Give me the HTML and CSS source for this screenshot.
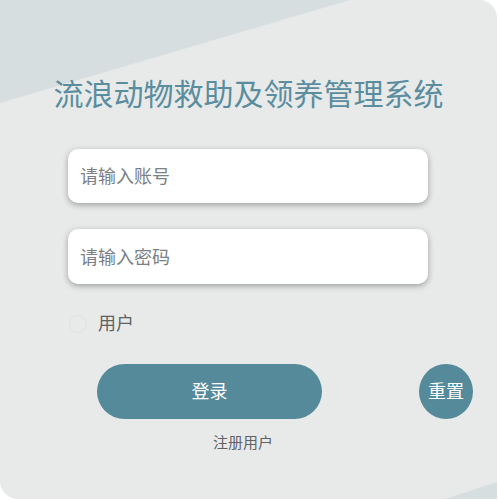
FILE: index.html
```html
<!DOCTYPE html>
<html lang="zh-CN">
<head>
<meta charset="utf-8">
<title>流浪动物救助及领养管理系统</title>
<link rel="stylesheet" href="styles.css">
</head>
<body>
<div class="card">
  <div class="content">
    <h1 class="title">流浪动物救助及领养管理系统</h1>
    <form class="form">
      <input class="field" type="text" placeholder="请输入账号">
      <input class="field field-pwd" type="password" placeholder="请输入密码">
      <label class="role">
        <span class="radio"></span>
        <span class="role-text">用户</span>
      </label>
    </form>
    <div class="actions">
      <button class="btn btn-login" type="button">登录</button>
      <button class="btn btn-reset" type="button">重置</button>
    </div>
    <a class="register">注册用户</a>
  </div>
</div>
</body>
</html>
```

FILE: styles.css
```css
html, body {
  margin: 0;
  padding: 0;
  background: #ffffff;
}
body {
  font-family: "Noto Sans CJK SC", "Noto Sans", sans-serif;
}
.card {
  position: relative;
  width: 497px;
  height: 499px;
  background: #e8eaea;
  border-radius: 0 18px 0 18px;
  overflow: hidden;
}
.card::before,
.card::after {
  content: "";
  position: absolute;
  inset: 0;
  background: #d6dee0;
  pointer-events: none;
}
.card::before {
  clip-path: polygon(0 0, 350px 0, 0 103px);
}
.card::after {
  clip-path: polygon(445px 499px, 497px 482px, 497px 499px);
}
.content {
  position: relative;
  z-index: 1;
  display: flex;
  flex-direction: column;
  align-items: flex-start;
  padding-top: 72px;
}
.title {
  align-self: stretch;
  margin: 0;
  font-size: 30px;
  line-height: 40px;
  font-weight: normal;
  text-align: center;
  color: #5a8d9e;
}
.form {
  display: flex;
  flex-direction: column;
  width: 360px;
  margin: 37px 0 0 68px;
}
.field {
  box-sizing: border-box;
  width: 360px;
  height: 54px;
  border: none;
  outline: none;
  border-radius: 10px;
  background: #ffffff;
  box-shadow: 0 2px 6px rgba(0, 0, 0, 0.32);
  padding: 0 12px 2px;
  font-family: inherit;
  font-size: 18px;
  color: #333;
}
.field::placeholder {
  color: #7b7f86;
}
.field-pwd {
  height: 55px;
  margin-top: 26px;
}
.role {
  display: flex;
  align-items: center;
  margin-top: 30px;
  height: 19px;
}
.radio {
  box-sizing: border-box;
  width: 18px;
  height: 18px;
  margin-left: 1px;
  border: 1px solid #dde2e6;
  border-radius: 50%;
}
.role-text {
  margin-left: 11px;
  padding-bottom: 2px;
  font-size: 18px;
  line-height: 19px;
  color: #606266;
}
.actions {
  display: flex;
  margin: 31px 0 0 97px;
  gap: 97px;
}
.btn {
  height: 55px;
  border: none;
  padding: 0 0 3px;
  background: #558a9a;
  color: #ffffff;
  font-family: inherit;
  font-size: 18px;
  cursor: pointer;
}
.btn-login {
  width: 225px;
  border-radius: 28px;
}
.btn-reset {
  width: 54px;
  border-radius: 50%;
}
.register {
  margin: 13px 0 0 213px;
  font-size: 15px;
  line-height: 20px;
  color: #606266;
  cursor: pointer;
}
```
